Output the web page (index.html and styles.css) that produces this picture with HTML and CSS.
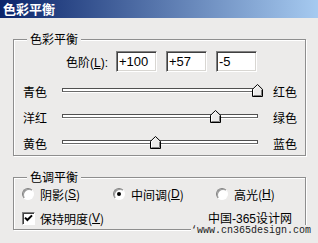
FILE: index.html
```html
<!DOCTYPE html>
<html>
<head>
  <title>色彩平衡</title>
  <link rel="stylesheet" href="styles.css">
</head>
<body>
  <div class="window">
    <div class="titlebar">色彩平衡</div>
    <div class="content">
      <div class="group balance">
        <span class="group-title">色彩平衡</span>
        <div class="levels">
          <span class="levels-label">色阶(<u>L</u>):</span>
          <input type="text" class="field" value="+100">
          <input type="text" class="field" value="+57">
          <input type="text" class="field" value="-5">
        </div>

        <div class="slider-row">
          <span class="side">青色</span>
          <div class="track">
            <span class="thumb" style="left: 100%">
              <svg width="11" height="13" viewBox="0 0 11 13">
                <path d="M0.5 12.5V5.3L5.5 0.5L10.5 5.3V12.5Z" fill="#ecebea" stroke="#000"/>
                <path d="M1.5 11.5V5.7L5.5 1.9" fill="none" stroke="#fff"/>
                <path d="M9.5 5.8V11.5H1.5" fill="none" stroke="#808080"/>
              </svg>
            </span>
          </div>
          <span class="side right">红色</span>
        </div>

        <div class="slider-row">
          <span class="side">洋红</span>
          <div class="track">
            <span class="thumb" style="left: 78.5%">
              <svg width="11" height="13" viewBox="0 0 11 13">
                <path d="M0.5 12.5V5.3L5.5 0.5L10.5 5.3V12.5Z" fill="#ecebea" stroke="#000"/>
                <path d="M1.5 11.5V5.7L5.5 1.9" fill="none" stroke="#fff"/>
                <path d="M9.5 5.8V11.5H1.5" fill="none" stroke="#808080"/>
              </svg>
            </span>
          </div>
          <span class="side right">绿色</span>
        </div>

        <div class="slider-row">
          <span class="side">黄色</span>
          <div class="track">
            <span class="thumb" style="left: 47.5%">
              <svg width="11" height="13" viewBox="0 0 11 13">
                <path d="M0.5 12.5V5.3L5.5 0.5L10.5 5.3V12.5Z" fill="#ecebea" stroke="#000"/>
                <path d="M1.5 11.5V5.7L5.5 1.9" fill="none" stroke="#fff"/>
                <path d="M9.5 5.8V11.5H1.5" fill="none" stroke="#808080"/>
              </svg>
            </span>
          </div>
          <span class="side right">蓝色</span>
        </div>
      </div>

      <div class="group tone">
        <span class="group-title">色调平衡</span>
        <div class="radios">
          <label class="opt opt-shadow"><span class="radio"></span>阴影(<u>S</u>)</label>
          <label class="opt opt-mid"><span class="radio checked"></span>中间调(<u>D</u>)</label>
          <label class="opt"><span class="radio"></span>高光(<u>H</u>)</label>
        </div>
        <label class="opt check-row">
          <span class="check">
            <svg width="9" height="9" viewBox="0 0 9 9">
              <path d="M1 3.6L3.4 6L8 1.4" fill="none" stroke="#000" stroke-width="2"/>
            </svg>
          </span>保持明度(<u>V</u>)
        </label>
      </div>
    </div>

    <!-- watermark from the source image -->
    <div class="mark-cn">中国-365设计网</div>
    <div class="mark-url">‘www.cn365design.com</div>
  </div>
</body>
</html>
```

FILE: styles.css
```css
body {
  margin: 0;
  background-color: #ecebea;
  font-family: "Liberation Sans", "Noto Sans CJK SC", sans-serif;
  font-size: 12px;
  color: #000000;
}

.window {
  position: relative;
  width: 318px;
  height: 243px;
  overflow: hidden;
}

.titlebar {
  height: 18px;
  padding-left: 3px;
  background: linear-gradient(to right, #0a246a, #a6caf0);
  color: #FFFFFF;
  font-family: "Noto Sans CJK SC", sans-serif;
  font-size: 13px;
  font-weight: bold;
  line-height: 18px;
}

.content {
  padding: 0 12px 0 13px;
}

.group {
  position: relative;
  border: 1px solid #8e8e8e;
  box-shadow: inset 1px 1px #FFFFFF, 1px 1px #FFFFFF;
}

.group-title {
  position: absolute;
  top: -8px;
  left: 13px;
  padding: 0 3px;
  background-color: #ecebea;
  font-family: "Noto Sans CJK SC", sans-serif;
  line-height: 14px;
}

.balance {
  margin-top: 21px;
  padding: 11px 0 0 9px;
}

.levels {
  display: flex;
  align-items: center;
  margin-bottom: 5px;
}

.levels-label {
  width: 85px;
  margin-right: 8px;
  text-align: right;
}

.field {
  width: 41px;
  height: 21px;
  box-sizing: border-box;
  margin: 0 9px 0 0;
  padding: 0 0 0 2px;
  border: 1px solid;
  border-color: #808080 #FFFFFF #FFFFFF #808080;
  box-shadow: inset 1px 1px #404040, inset -1px -1px #d8d6d2;
  background-color: #FFFFFF;
  font-family: "Liberation Sans", sans-serif;
  font-size: 13px;
  color: #000000;
}

.slider-row {
  display: flex;
  align-items: center;
  height: 26px;
}

.side {
  width: 39px;
  padding-top: 2px;
  font-family: "Noto Sans CJK SC", sans-serif;
}

.side.right {
  width: auto;
  margin-left: 15px;
}

.track {
  position: relative;
  width: 196px;
  height: 4px;
  box-sizing: border-box;
  border: 1px solid #505050;
  border-bottom-color: #6a6a6a;
  background-color: #FFFFFF;
  box-shadow: 0 1px #FFFFFF;
}

.thumb {
  position: absolute;
  top: -5px;
  margin-left: -5px;
  line-height: 0;
}

.tone {
  margin-top: 21px;
  padding: 6px 0 1px 8px;
}

.radios {
  display: flex;
  height: 20px;
}

.opt {
  display: flex;
  align-items: center;
  height: 20px;
  font-family: "Noto Sans CJK SC", sans-serif;
}

.opt u {
  font-family: "Liberation Sans", sans-serif;
}

.opt-shadow {
  width: 91px;
}

.opt-mid {
  width: 103px;
}

.radio {
  position: relative;
  width: 12px;
  height: 12px;
  box-sizing: border-box;
  margin-right: 6px;
  border: 1px solid;
  border-color: #808080 #FFFFFF #FFFFFF #808080;
  border-radius: 50%;
  background-color: #FFFFFF;
  box-shadow: inset 1px 1px #9a9a9a;
}

.radio.checked::after {
  content: "";
  position: absolute;
  top: 3px;
  left: 3px;
  width: 4px;
  height: 4px;
  border-radius: 50%;
  background-color: #000000;
}

.check-row {
  margin-top: 4px;
}

.check {
  display: flex;
  align-items: center;
  justify-content: center;
  width: 13px;
  height: 13px;
  box-sizing: border-box;
  margin-right: 5px;
  border: 1px solid;
  border-color: #808080 #FFFFFF #FFFFFF #808080;
  background-color: #FFFFFF;
  box-shadow: inset 1px 1px #404040;
}

.mark-cn {
  position: absolute;
  top: 209px;
  left: 208px;
  font-family: "Liberation Sans", "Noto Sans CJK SC", sans-serif;
  font-size: 12px;
}

.mark-url {
  position: absolute;
  top: 225px;
  left: 191px;
  padding-right: 2px;
  background-color: #ecebea;
  font-family: "Liberation Mono", monospace;
  font-size: 10px;
  color: #222222;
}
```
